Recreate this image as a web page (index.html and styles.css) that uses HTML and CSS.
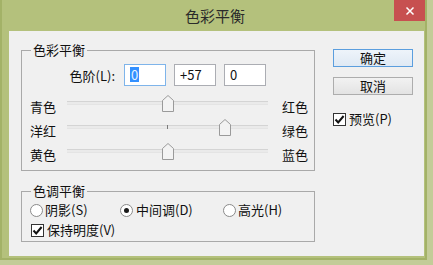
FILE: index.html
```html
<!DOCTYPE html>
<html lang="zh-CN">
<head>
<meta charset="utf-8">
<title>色彩平衡</title>
<link rel="stylesheet" href="styles.css">
</head>
<body>
<div class="window">
  <div class="titlebar">
    <div class="title">色彩平衡</div>
    <div class="close"><svg width="10" height="10" viewBox="0 0 10 10"><path d="M1.5 1.5L8.5 8.5M8.5 1.5L1.5 8.5" stroke="#fff" stroke-width="1.5" fill="none"/></svg></div>
  </div>
  <div class="client">
    <div class="main">
      <fieldset class="group g1">
        <legend>色彩平衡</legend>
        <div class="levels">
          <span class="lvl-label">色阶(L):</span>
          <div class="input focus"><span class="sel">0</span></div>
          <div class="input">+57</div>
          <div class="input">0</div>
        </div>
        <div class="slider-row">
          <span class="lbl">青色</span>
          <div class="track"><div class="groove"></div><div class="tick"></div><svg class="thumb" style="left: calc(50% - 6px)" width="12" height="17" viewBox="0 0 12 17"><path d="M0.5 5.5L6 0.5L11.5 5.5V16.5H0.5Z" fill="#f3f3f3" stroke="#9a9a9a"/></svg></div>
          <span class="lbl rt">红色</span>
        </div>
        <div class="slider-row">
          <span class="lbl">洋红</span>
          <div class="track"><div class="groove"></div><div class="tick"></div><svg class="thumb" style="left: calc(78.5% - 6px)" width="12" height="17" viewBox="0 0 12 17"><path d="M0.5 5.5L6 0.5L11.5 5.5V16.5H0.5Z" fill="#f3f3f3" stroke="#9a9a9a"/></svg></div>
          <span class="lbl rt">绿色</span>
        </div>
        <div class="slider-row">
          <span class="lbl">黄色</span>
          <div class="track"><div class="groove"></div><div class="tick"></div><svg class="thumb" style="left: calc(50% - 6px)" width="12" height="17" viewBox="0 0 12 17"><path d="M0.5 5.5L6 0.5L11.5 5.5V16.5H0.5Z" fill="#f3f3f3" stroke="#9a9a9a"/></svg></div>
          <span class="lbl rt">蓝色</span>
        </div>
      </fieldset>
      <fieldset class="group g2">
        <legend>色调平衡</legend>
        <div class="radios">
          <div class="opt"><span class="radio"></span>阴影(S)</div>
          <div class="opt"><span class="radio on"></span>中间调(D)</div>
          <div class="opt"><span class="radio"></span>高光(H)</div>
        </div>
        <div class="opt chk-row"><span class="check"><svg width="11" height="11" viewBox="0 0 11 11"><path d="M1.5 5.5L4.2 8.4L9.6 2" stroke="#111" stroke-width="2" fill="none"/></svg></span>保持明度(V)</div>
      </fieldset>
    </div>
    <div class="side">
      <div class="btn default">确定</div>
      <div class="btn">取消</div>
      <div class="opt preview"><span class="check"><svg width="11" height="11" viewBox="0 0 11 11"><path d="M1.5 5.5L4.2 8.4L9.6 2" stroke="#111" stroke-width="2" fill="none"/></svg></span>预览(P)</div>
    </div>
  </div>
</div>
</body>
</html>
```

FILE: styles.css
```css
* { box-sizing: border-box; }
html, body { margin: 0; padding: 0; }
body {
  width: 433px;
  height: 265px;
  background: #c3cc98;
  font-family: "Noto Sans CJK SC", "Noto Sans", sans-serif;
  font-size: 13px;
  color: #111;
  overflow: hidden;
}
.window {
  width: 427px;
  height: 260px;
  background: #b4c17c;
  border-left: 2px solid #a3b267;
  border-right: 2px solid #a3b267;
  border-bottom: 2px solid #a3b267;
  display: flex;
  flex-direction: column;
}
.titlebar {
  height: 31px;
  display: flex;
  justify-content: center;
  align-items: center;
  position: relative;
}
.title {
  font-size: 15px;
  line-height: 20px;
  color: #2a2a2a;
  margin-left: 3px;
  margin-top: 1px;
}
.close {
  position: absolute;
  top: 0;
  right: 0;
  width: 31px;
  height: 21px;
  background: #c75050;
  display: flex;
  align-items: center;
  justify-content: center;
}
.client {
  margin-left: 7px;
  width: 415px;
  height: 225px;
  background: #f0f0f0;
  display: flex;
  padding: 11px 11px 0 12px;
}
.main { width: 294px; flex: none; }
.side {
  width: 80px;
  flex: none;
  margin-left: 18px;
  display: flex;
  flex-direction: column;
}
.group {
  margin: 0;
  padding: 0;
  min-width: 0;
  width: 294px;
  border: 1px solid #a9a9a9;
}
.group legend {
  margin-left: 9px;
  padding: 0 2px;
  font-size: 13px;
  line-height: 16px;
}
.g1 { padding-bottom: 4px; }
.g2 { margin-top: 12px; padding-bottom: 3px; }
.levels {
  display: flex;
  align-items: center;
  margin-top: 6px;
  height: 22px;
  margin-bottom: 8px;
}
.lvl-label {
  width: 93px;
  flex: none;
  text-align: right;
  margin-right: 9px;
  white-space: nowrap;
}
.input {
  width: 42px;
  flex: none;
  height: 22px;
  border: 1px solid #abadb3;
  background: #fff;
  margin-right: 8px;
  padding-left: 5px;
  line-height: 20px;
}
.input.focus { border-color: #7eb4ea; }
.sel {
  background: #3390ff;
  color: #e8f2ff;
  display: inline-block;
  line-height: 15px;
  padding: 0 1px;
}
.slider-row {
  display: flex;
  align-items: center;
  height: 24px;
  padding: 0 5px 0 8px;
}
.lbl { width: 37px; flex: none; white-space: nowrap; }
.lbl.rt { width: 26px; margin-left: 14px; }
.track {
  width: 201px;
  flex: none;
  height: 24px;
  position: relative;
}
.groove {
  margin-top: 7px;
  height: 4px;
  border-top: 1px solid #d4d4d4;
  border-bottom: 1px solid #e4e4e4;
  background: #eaeaea;
}
.tick {
  position: absolute;
  left: 100px;
  top: 7px;
  width: 1px;
  height: 4px;
  background: #7a7a7a;
}
.thumb {
  position: absolute;
  top: 1px;
}
.opt {
  display: flex;
  align-items: center;
  height: 16px;
  line-height: 16px;
  white-space: nowrap;
}
.radios {
  display: grid;
  grid-template-columns: 90px 103px auto;
  margin-top: 3px;
  padding-left: 8px;
}
.radio {
  width: 13px;
  height: 13px;
  flex: none;
  border: 1px solid #8a8a8a;
  border-radius: 50%;
  background: #fff;
  margin-right: 2px;
  display: flex;
  align-items: center;
  justify-content: center;
}
.radio.on::after {
  content: "";
  width: 5px;
  height: 5px;
  border-radius: 50%;
  background: #1a1a1a;
}
.radios .opt:nth-child(2) .radio { margin-right: 3px; }
.check {
  width: 13px;
  height: 13px;
  flex: none;
  border: 1px solid #333;
  background: #fff;
  margin-right: 3px;
  display: flex;
  align-items: center;
  justify-content: center;
}
.chk-row {
  margin-top: 4px;
  padding-left: 9px;
}
.btn {
  height: 18px;
  border: 1px solid #adadad;
  background: linear-gradient(#f2f2f2, #e3e3e3);
  text-align: center;
  line-height: 16px;
  font-size: 13px;
}
.btn.default {
  margin-top: 7px;
  border-color: #5b9ede;
  background: linear-gradient(#eef4fa, #dfe9f4);
}
.btn + .btn { margin-top: 10px; }
.preview { margin-top: 16px; }
```
